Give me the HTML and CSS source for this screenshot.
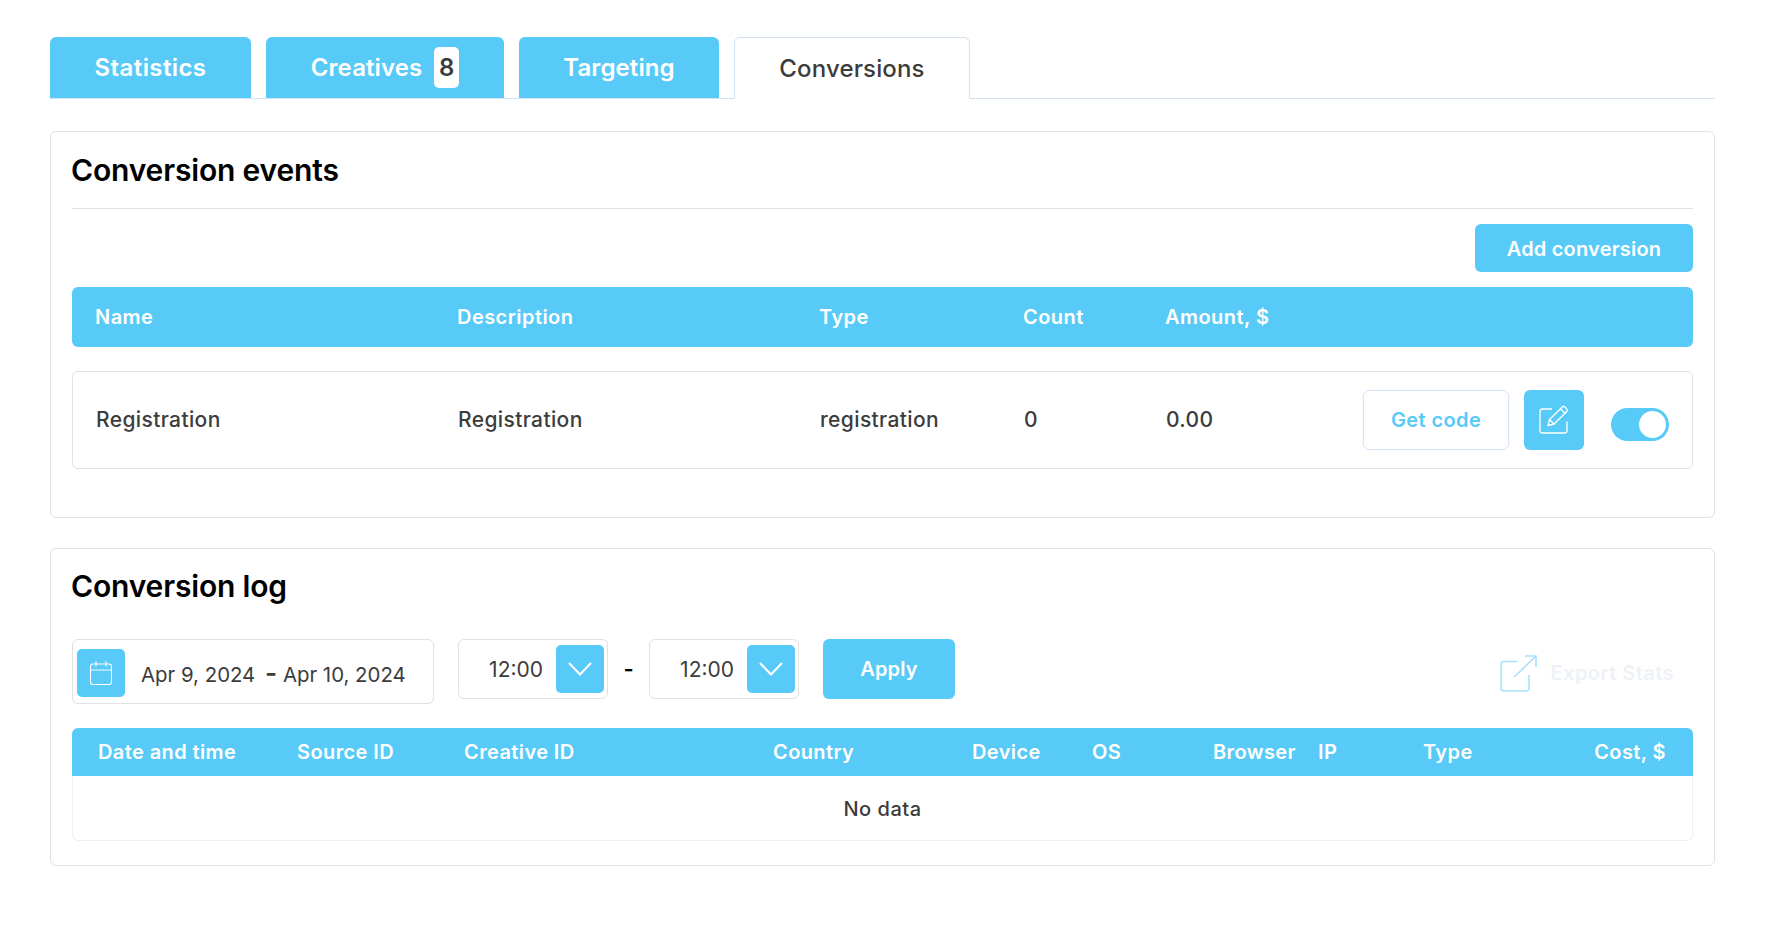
FILE: index.html
```html
<!DOCTYPE html>
<html lang="en">
<head>
<meta charset="utf-8">
<title>Conversions</title>
<link rel="stylesheet" href="styles.css">
</head>
<body>
<main class="page">
  <nav class="tabs">
    <a class="tab tab-stat">Statistics</a>
    <a class="tab tab-crea">Creatives <span class="badge">8</span></a>
    <a class="tab tab-targ">Targeting</a>
    <a class="tab tab-conv active">Conversions</a>
  </nav>

  <section class="card card-events">
    <h2 class="title title-events">Conversion events</h2>
    <div class="toolbar"><button class="btn btn-add">Add conversion</button></div>
    <div class="thead events-grid">
      <span>Name</span><span>Description</span><span>Type</span><span>Count</span><span>Amount, $</span>
    </div>
    <div class="row events-grid">
      <span class="cell">Registration</span><span class="cell">Registration</span><span class="cell">registration</span><span class="cell">0</span><span class="cell">0.00</span>
      <div class="actions">
        <button class="btn-code">Get code</button>
        <button class="btn-edit" aria-label="Edit">
          <svg width="32" height="32" viewBox="0 0 32 32" fill="none" stroke="#fff" stroke-width="1.300" stroke-linejoin="round" stroke-linecap="round">
            <path d="M13.500 5H4.500Q2 5 2 7.500V26.500Q2 29 4.500 29H26.500Q29 29 29 26.500V18"/>
            <path d="M10 21.500L11.500 15.500L24.500 2.700Q25.500 1.700 26.500 2.700L29 5.200Q30 6.200 29 7.200L16 20Z"/>
            <path d="M22.500 4.700L27 9.200M11.500 15.500L16 20"/>
          </svg>
        </button>
        <span class="toggle"><span class="knob"></span></span>
      </div>
    </div>
  </section>

  <section class="card card-log">
    <h2 class="title title-log">Conversion log</h2>
    <div class="filters">
      <div class="date">
        <span class="date-icon">
          <svg width="24" height="26" viewBox="0 0 24 26" fill="none" stroke="#fff" stroke-width="1.100" stroke-linecap="round">
            <rect x="1.500" y="4" width="21" height="20.500" rx="2.500"/>
            <path d="M1.500 10H22.500" stroke-dasharray="1.500 1"/>
            <path d="M7 1.500V6M17 1.500V6"/>
          </svg>
        </span>
        <span class="date-text">Apr 9, 2024 <b class="date-dash">-</b> Apr 10, 2024</span>
      </div>
      <div class="time time-first">
        <span class="time-val">12:00</span>
        <span class="time-arrow"><svg width="24" height="14" viewBox="0 0 24 14" fill="none" stroke="#fff" stroke-width="2.100"><path d="M1 1L12 12.500L23 1"/></svg></span>
      </div>
      <span class="time-sep">-</span>
      <div class="time">
        <span class="time-val">12:00</span>
        <span class="time-arrow"><svg width="24" height="14" viewBox="0 0 24 14" fill="none" stroke="#fff" stroke-width="2.100"><path d="M1 1L12 12.500L23 1"/></svg></span>
      </div>
      <button class="btn btn-apply">Apply</button>
      <div class="export">
        <svg width="37" height="37" viewBox="0 0 37 37" fill="none" stroke="#a9e2fa" stroke-width="1.600">
          <path d="M17 6.500H4Q1 6.500 1 9.500V33Q1 36 4 36H26Q29 36 29 33V20"/>
          <path d="M14 22L35.500 1.500M25 1H36V12"/>
        </svg>
        <span>Export Stats</span>
      </div>
    </div>
    <div class="log-head">
      <span>Date and time</span><span>Source ID</span><span>Creative ID</span><span>Country</span><span>Device</span><span>OS</span><span>Browser</span><span>IP</span><span>Type</span><span class="cost">Cost, $</span>
    </div>
    <div class="log-body">No data</div>
  </section>
</main>
</body>
</html>
```

FILE: styles.css
```css
* { box-sizing: border-box; }
html, body { margin: 0; padding: 0; background: #fff; }
body {
  font-family: "Inter", "Noto Sans", sans-serif;
  color: #3c3c3c;
  height: 928px;
  overflow: hidden;
}
button { font-family: inherit; border: 0; cursor: pointer; padding: 0; }
.page { padding: 37px 65px 0 50px; }

.tabs {
  display: flex;
  gap: 15px;
  height: 62px;
  border-bottom: 1px solid #d3e3f3;
}
.tab {
  height: 61px;
  display: flex;
  align-items: center;
  justify-content: center;
  gap: 12px;
  background: #57caf8;
  color: #fff;
  font-size: 24px;
  font-weight: 600;
  letter-spacing: 0.1px;
  border-radius: 6px 6px 0 0;
}
.tab-stat { width: 201px; letter-spacing: 0.4px; }
.tab-crea { width: 238px; }
.tab-targ { width: 200px; }
.tab-conv { width: 236px; }
.tab.active {
  height: 62px;
  background: #fff;
  color: #3c3c3c;
  font-weight: 500;
  letter-spacing: 0.15px;
  border: 1px solid #d3e3f3;
  border-bottom: 1px solid #fff;
}
.badge {
  width: 25px;
  height: 41px;
  background: #fff;
  color: #3c3c3c;
  border-radius: 5px;
  display: flex;
  align-items: center;
  justify-content: center;
}

.card {
  border: 1px solid #dfe1e3;
  border-radius: 6px;
  padding: 0 21px;
}
.card-events { margin-top: 32px; height: 387px; }
.card-log { margin-top: 30px; height: 318px; }
.title {
  margin: 0;
  text-indent: -1px;
  color: #000;
  font-size: 30px;
  font-weight: 600;
  letter-spacing: -0.17px;
}
.title-events {
  height: 77px;
  line-height: 76px;
  border-bottom: 1px solid #dfe1e3;
}
.title-log { height: 90px; line-height: 74px; }

.toolbar { display: flex; justify-content: flex-end; padding-top: 15px; }
.btn {
  background: #57caf8;
  color: #fff;
  font-weight: 600;
  font-size: 20px;
  letter-spacing: 0.2px;
  border-radius: 6px;
}
.btn-add { width: 218px; height: 48px; padding-top: 1px; }

.events-grid {
  display: grid;
  grid-template-columns: 362px 362px 204px 142px 1fr auto;
  align-items: center;
}
.thead {
  margin-top: 15px;
  height: 60px;
  padding-left: 23px;
  background: #57caf8;
  color: #fff;
  border-radius: 6px;
  font-size: 20px;
  font-weight: 600;
  letter-spacing: 0.45px;
}
.row {
  margin-top: 24px;
  height: 98px;
  padding: 0 23px;
  border: 1px solid #dfe1e3;
  border-radius: 6px;
  font-size: 21px;
  font-weight: 500;
  letter-spacing: 0.38px;
}
.cell { padding-bottom: 2px; }
.actions { display: flex; align-items: center; }
.btn-code {
  width: 146px;
  height: 60px;
  background: #fff;
  border: 1px solid #d3e3f3;
  border-radius: 6px;
  color: #57caf8;
  font-size: 20px;
  font-weight: 600;
  letter-spacing: 0.4px;
}
.btn-edit {
  width: 60px;
  height: 60px;
  margin-left: 15px;
  background: #57caf8;
  border-radius: 6px;
  display: flex;
  align-items: center;
  justify-content: center;
}
.toggle {
  width: 58px;
  height: 33px;
  margin: 9px 0 0 27px;
  padding: 3px;
  background: #57caf8;
  border-radius: 17px;
  display: flex;
  justify-content: flex-end;
}
.knob { width: 27px; height: 27px; background: #fff; border-radius: 50%; }

.filters { display: flex; align-items: flex-start; }
.date {
  width: 362px;
  height: 65px;
  padding: 2px 4px 0;
  display: flex;
  align-items: center;
  border: 1px solid #dfe1e3;
  border-radius: 6px;
}
.date-icon {
  width: 48px;
  height: 48px;
  background: #57caf8;
  border-radius: 5px;
  display: flex;
  align-items: center;
  justify-content: center;
}
.date-text {
  margin-left: 16px;
  padding-top: 3px;
  font-size: 20.4px;
  white-space: nowrap;
}
.date-dash { font-size: 26px; line-height: 20px; font-weight: 600; margin: 0 0 0 4px; }
.time {
  width: 150px;
  height: 60px;
  margin-left: 23px;
  padding: 5px 3px 5px 0;
  display: flex;
  justify-content: flex-end;
  align-items: center;
  gap: 13px;
  border: 1px solid #dfe1e3;
  border-radius: 6px;
}
.time-first { margin-left: 24px; }
.time-val { font-size: 21px; padding-top: 1px; }
.time-arrow {
  width: 48px;
  height: 48px;
  background: #57caf8;
  border-radius: 5px;
  display: flex;
  align-items: center;
  justify-content: center;
}
.time-sep {
  width: 41px;
  margin-right: -23px;
  line-height: 60px;
  text-align: center;
  color: #000;
  font-size: 22px;
  font-weight: 600;
}
.btn-apply { width: 132px; height: 60px; margin-left: 24px; }
.export {
  margin-left: auto;
  margin-right: 19px;
  height: 60px;
  padding-top: 8px;
  display: flex;
  align-items: center;
  gap: 14px;
  color: #eef2f6;
  font-size: 20px;
  font-weight: 600;
  letter-spacing: 0.45px;
}

.log-head {
  margin-top: 24px;
  height: 48px;
  padding: 0 27px 0 26px;
  display: grid;
  grid-template-columns: 199px 167px 309px 199px 120px 121px 105px 105px 1fr auto;
  align-items: center;
  background: #57caf8;
  color: #fff;
  font-size: 20px;
  font-weight: 600;
  letter-spacing: 0.4px;
  border-radius: 6px 6px 0 0;
}
.log-body {
  height: 65px;
  padding-top: 2px;
  display: flex;
  align-items: center;
  justify-content: center;
  font-size: 20px;
  font-weight: 500;
  letter-spacing: 0.5px;
  border: 1px solid #eef0f2;
  border-top: 0;
  border-radius: 0 0 6px 6px;
}
```
